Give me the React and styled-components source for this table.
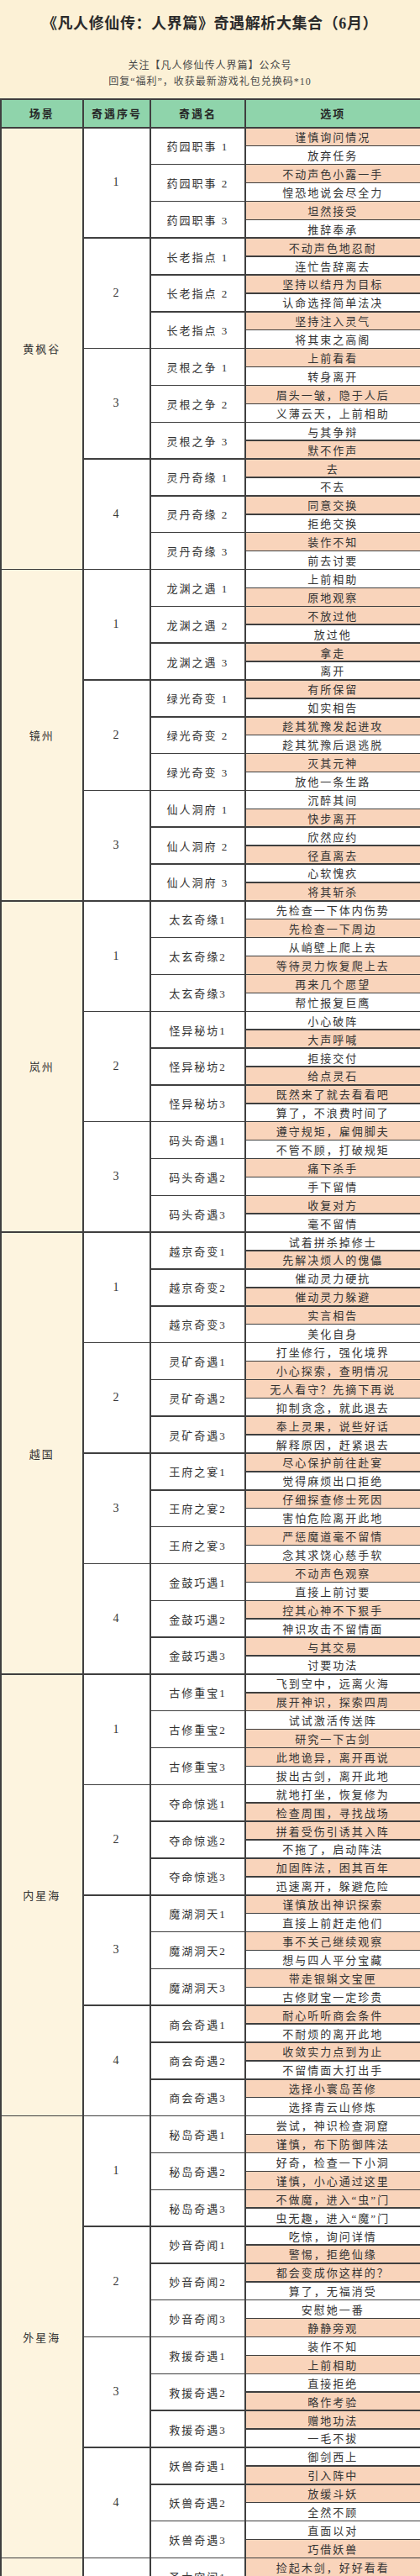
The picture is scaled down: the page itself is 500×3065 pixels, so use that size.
import React, { Fragment } from 'react'
import styled, { createGlobalStyle } from 'styled-components'

const GlobalStyle = createGlobalStyle`
html, body {
    margin: 0;
    padding: 0;
    overflow: hidden;
    background: #ffffff;
}
body {
    font-family: "Liberation Serif", "Noto Sans CJK SC", serif;
    color: #333333;
}
`;

// [name, option A, option B, index of the highlighted option]
const scenes = [
    {
        name: '黄枫谷', groups: [
            ['1', [['药园职事 1', '谨慎询问情况', '放弃任务', 0], ['药园职事 2', '不动声色小露一手', '惶恐地说会尽全力', 0], ['药园职事 3', '坦然接受', '推辞奉承', 0]]],
            ['2', [['长老指点 1', '不动声色地忍耐', '连忙告辞离去', 0], ['长老指点 2', '坚持以结丹为目标', '认命选择简单法决', 0], ['长老指点 3', '坚持注入灵气', '将其束之高阁', 0]]],
            ['3', [['灵根之争 1', '上前看看', '转身离开', 0], ['灵根之争 2', '眉头一皱，隐于人后', '义薄云天，上前相助', 0], ['灵根之争 3', '与其争辩', '默不作声', 1]]],
            ['4', [['灵丹奇缘 1', '去', '不去', 0], ['灵丹奇缘 2', '同意交换', '拒绝交换', 0], ['灵丹奇缘 3', '装作不知', '前去讨要', 0]]],
        ]
    },
    {
        name: '镜州', groups: [
            ['1', [['龙渊之遇 1', '上前相助', '原地观察', 1], ['龙渊之遇 2', '不放过他', '放过他', 0], ['龙渊之遇 3', '拿走', '离开', 0]]],
            ['2', [['绿光奇变 1', '有所保留', '如实相告', 0], ['绿光奇变 2', '趁其犹豫发起进攻', '趁其犹豫后退逃脱', 0], ['绿光奇变 3', '灭其元神', '放他一条生路', 0]]],
            ['3', [['仙人洞府 1', '沉醉其间', '快步离开', 1], ['仙人洞府 2', '欣然应约', '径直离去', 1], ['仙人洞府 3', '心软愧疚', '将其斩杀', 1]]],
        ]
    },
    {
        name: '岚州', groups: [
            ['1', [['太玄奇缘1', '先检查一下体内伤势', '先检查一下周边', 1], ['太玄奇缘2', '从峭壁上爬上去', '等待灵力恢复爬上去', 1], ['太玄奇缘3', '再来几个愿望', '帮忙报复巨鹰', 0]]],
            ['2', [['怪异秘坊1', '小心破阵', '大声呼喊', 1], ['怪异秘坊2', '拒接交付', '给点灵石', 1], ['怪异秘坊3', '既然来了就去看看吧', '算了，不浪费时间了', 0]]],
            ['3', [['码头奇遇1', '遵守规矩，雇佣脚夫', '不管不顾，打破规矩', 0], ['码头奇遇2', '痛下杀手', '手下留情', 0], ['码头奇遇3', '收复对方', '毫不留情', 0]]],
        ]
    },
    {
        name: '越国', groups: [
            ['1', [['越京奇变1', '试着拼杀掉修士', '先解决烦人的傀儡', 1], ['越京奇变2', '催动灵力硬抗', '催动灵力躲避', 1], ['越京奇变3', '实言相告', '美化自身', 0]]],
            ['2', [['灵矿奇遇1', '打坐修行，强化境界', '小心探索，查明情况', 1], ['灵矿奇遇2', '无人看守？先摘下再说', '抑制贪念，就此退去', 0], ['灵矿奇遇3', '奉上灵果，说些好话', '解释原因，赶紧退去', 0]]],
            ['3', [['王府之宴1', '尽心保护前往赴宴', '觉得麻烦出口拒绝', 0], ['王府之宴2', '仔细探查修士死因', '害怕危险离开此地', 0], ['王府之宴3', '严惩魔道毫不留情', '念其求饶心慈手软', 0]]],
            ['4', [['金鼓巧遇1', '不动声色观察', '直接上前讨要', 0], ['金鼓巧遇2', '控其心神不下狠手', '神识攻击不留情面', 0], ['金鼓巧遇3', '与其交易', '讨要功法', 0]]],
        ]
    },
    {
        name: '内星海', groups: [
            ['1', [['古修重宝1', '飞到空中，远离火海', '展开神识，探索四周', 1], ['古修重宝2', '试试激活传送阵', '研究一下古剑', 1], ['古修重宝3', '此地诡异，离开再说', '拔出古剑，离开此地', 0]]],
            ['2', [['夺命惊逃1', '就地打坐，恢复修为', '检查周围，寻找战场', 1], ['夺命惊逃2', '拼着受伤引诱其入阵', '不拖了，启动阵法', 0], ['夺命惊逃3', '加固阵法，困其百年', '迅速离开，躲避危险', 0]]],
            ['3', [['魔湖洞天1', '谨慎放出神识探索', '直接上前赶走他们', 0], ['魔湖洞天2', '事不关己继续观察', '想与四人平分宝藏', 0], ['魔湖洞天3', '带走银蝌文宝匣', '古修财宝一定珍贵', 0]]],
            ['4', [['商会奇遇1', '耐心听听商会条件', '不耐烦的离开此地', 0], ['商会奇遇2', '收敛实力点到为止', '不留情面大打出手', 0], ['商会奇遇3', '选择小寰岛苦修', '选择青云山修炼', 0]]],
        ]
    },
    {
        name: '外星海', groups: [
            ['1', [['秘岛奇遇1', '尝试，神识检查洞窟', '谨慎，布下防御阵法', 1], ['秘岛奇遇2', '好奇，检查一下小洞', '谨慎，小心通过这里', 1], ['秘岛奇遇3', '不做魔，进入“虫”门', '虫无趣，进入“魔”门', 0]]],
            ['2', [['妙音奇闻1', '吃惊，询问详情', '警惕，拒绝仙缘', 1], ['妙音奇闻2', '都会变成你这样的？', '算了，无福消受', 0], ['妙音奇闻3', '安慰她一番', '静静旁观', 1]]],
            ['3', [['救援奇遇1', '装作不知', '上前相助', 1], ['救援奇遇2', '直接拒绝', '略作考验', 1], ['救援奇遇3', '赠地功法', '一毛不拔', 0]]],
            ['4', [['妖兽奇遇1', '御剑西上', '引入阵中', 1], ['妖兽奇遇2', '放缓斗妖', '全然不顾', 0], ['妖兽奇遇3', '直面以对', '巧借妖兽', 1]]],
        ]
    },
    // the next scene only starts at the bottom edge of the page
    {
        name: '', groups: [
            ['', [['圣木空间1', '捡起木剑，好好看看', '', 0], ['', '', '', 0], ['', '', '', 0]]],
        ]
    },
];

const App = () => {
    return (
        <Page>
            <GlobalStyle />
            <Banner>
                <Title>《凡人修仙传：人界篇》奇遇解析大集合（6月）</Title>
                <Notice>
                    <p>关注【凡人修仙传人界篇】公众号</p>
                    <p>回复“福利”，收获最新游戏礼包兑换码*10</p>
                </Notice>
            </Banner>
            <Table>
                <HeadCell>场景</HeadCell>
                <HeadCell>奇遇序号</HeadCell>
                <HeadCell>奇遇名</HeadCell>
                <HeadCell>选项</HeadCell>
                {scenes.map((scene, si) => {
                    const rows = scene.groups.reduce((n, g) => n + g[1].length * 2, 0);
                    return (
                        <Fragment key={si}>
                            <SceneCell $span={rows}>{scene.name}</SceneCell>
                            {scene.groups.map(([no, events], gi) => (
                                <Fragment key={gi}>
                                    <NumCell $span={events.length * 2}>{no}</NumCell>
                                    {events.map((ev, i) => (
                                        <Fragment key={i}>
                                            <NameCell>{ev[0]}</NameCell>
                                            <Option $hi={ev[3] === 0}>{ev[1]}</Option>
                                            <Option $hi={ev[3] === 1}>{ev[2]}</Option>
                                        </Fragment>
                                    ))}
                                </Fragment>
                            ))}
                        </Fragment>
                    );
                })}
            </Table>
        </Page>
    );
}

const Page = styled.div`
width: 500px;
height: 3065px;
overflow: hidden;
`;

const Banner = styled.header`
height: 117px;
background: #fcf1d6;
display: flex;
flex-direction: column;
align-items: center;
`;

const Title = styled.h1`
margin: 16px 0 0;
font-size: 18px;
line-height: 24px;
font-weight: bold;
letter-spacing: 0.6px;
color: #2b2b2b;
white-space: nowrap;
`;

const Notice = styled.div`
margin-top: 29px;
text-align: center;
p {
    margin: 0;
    font-size: 12px;
    line-height: 19px;
    letter-spacing: 1px;
    color: #4a4a4a;
}
`;

const Table = styled.div`
display: grid;
grid-template-columns: 96.75px 78.5px 111.5px 1fr;
grid-template-rows: 32.5px;
grid-auto-rows: 20.41px;
gap: 1.5px;
padding: 1.5px 0 0 1.5px;
background: #3f3f3f;
`;

const Cell = styled.div`
display: flex;
align-items: center;
justify-content: center;
font-size: 13px;
letter-spacing: 2px;
white-space: nowrap;
overflow: hidden;
`;

const HeadCell = styled(Cell)`
background: #8fd4ab;
font-weight: bold;
color: #262626;
`;

const SceneCell = styled(Cell)`
grid-column: 1;
grid-row: span ${p => p.$span};
background: #fdf4df;
`;

const NumCell = styled(Cell)`
grid-column: 2;
grid-row: span ${p => p.$span};
background: #ffffff;
font-size: 14px;
`;

const NameCell = styled(Cell)`
grid-column: 3;
grid-row: span 2;
background: #ffffff;
`;

const Option = styled(Cell)`
grid-column: 4;
background: ${p => (p.$hi ? '#f9d4bb' : '#ffffff')};
`;

export default App;
